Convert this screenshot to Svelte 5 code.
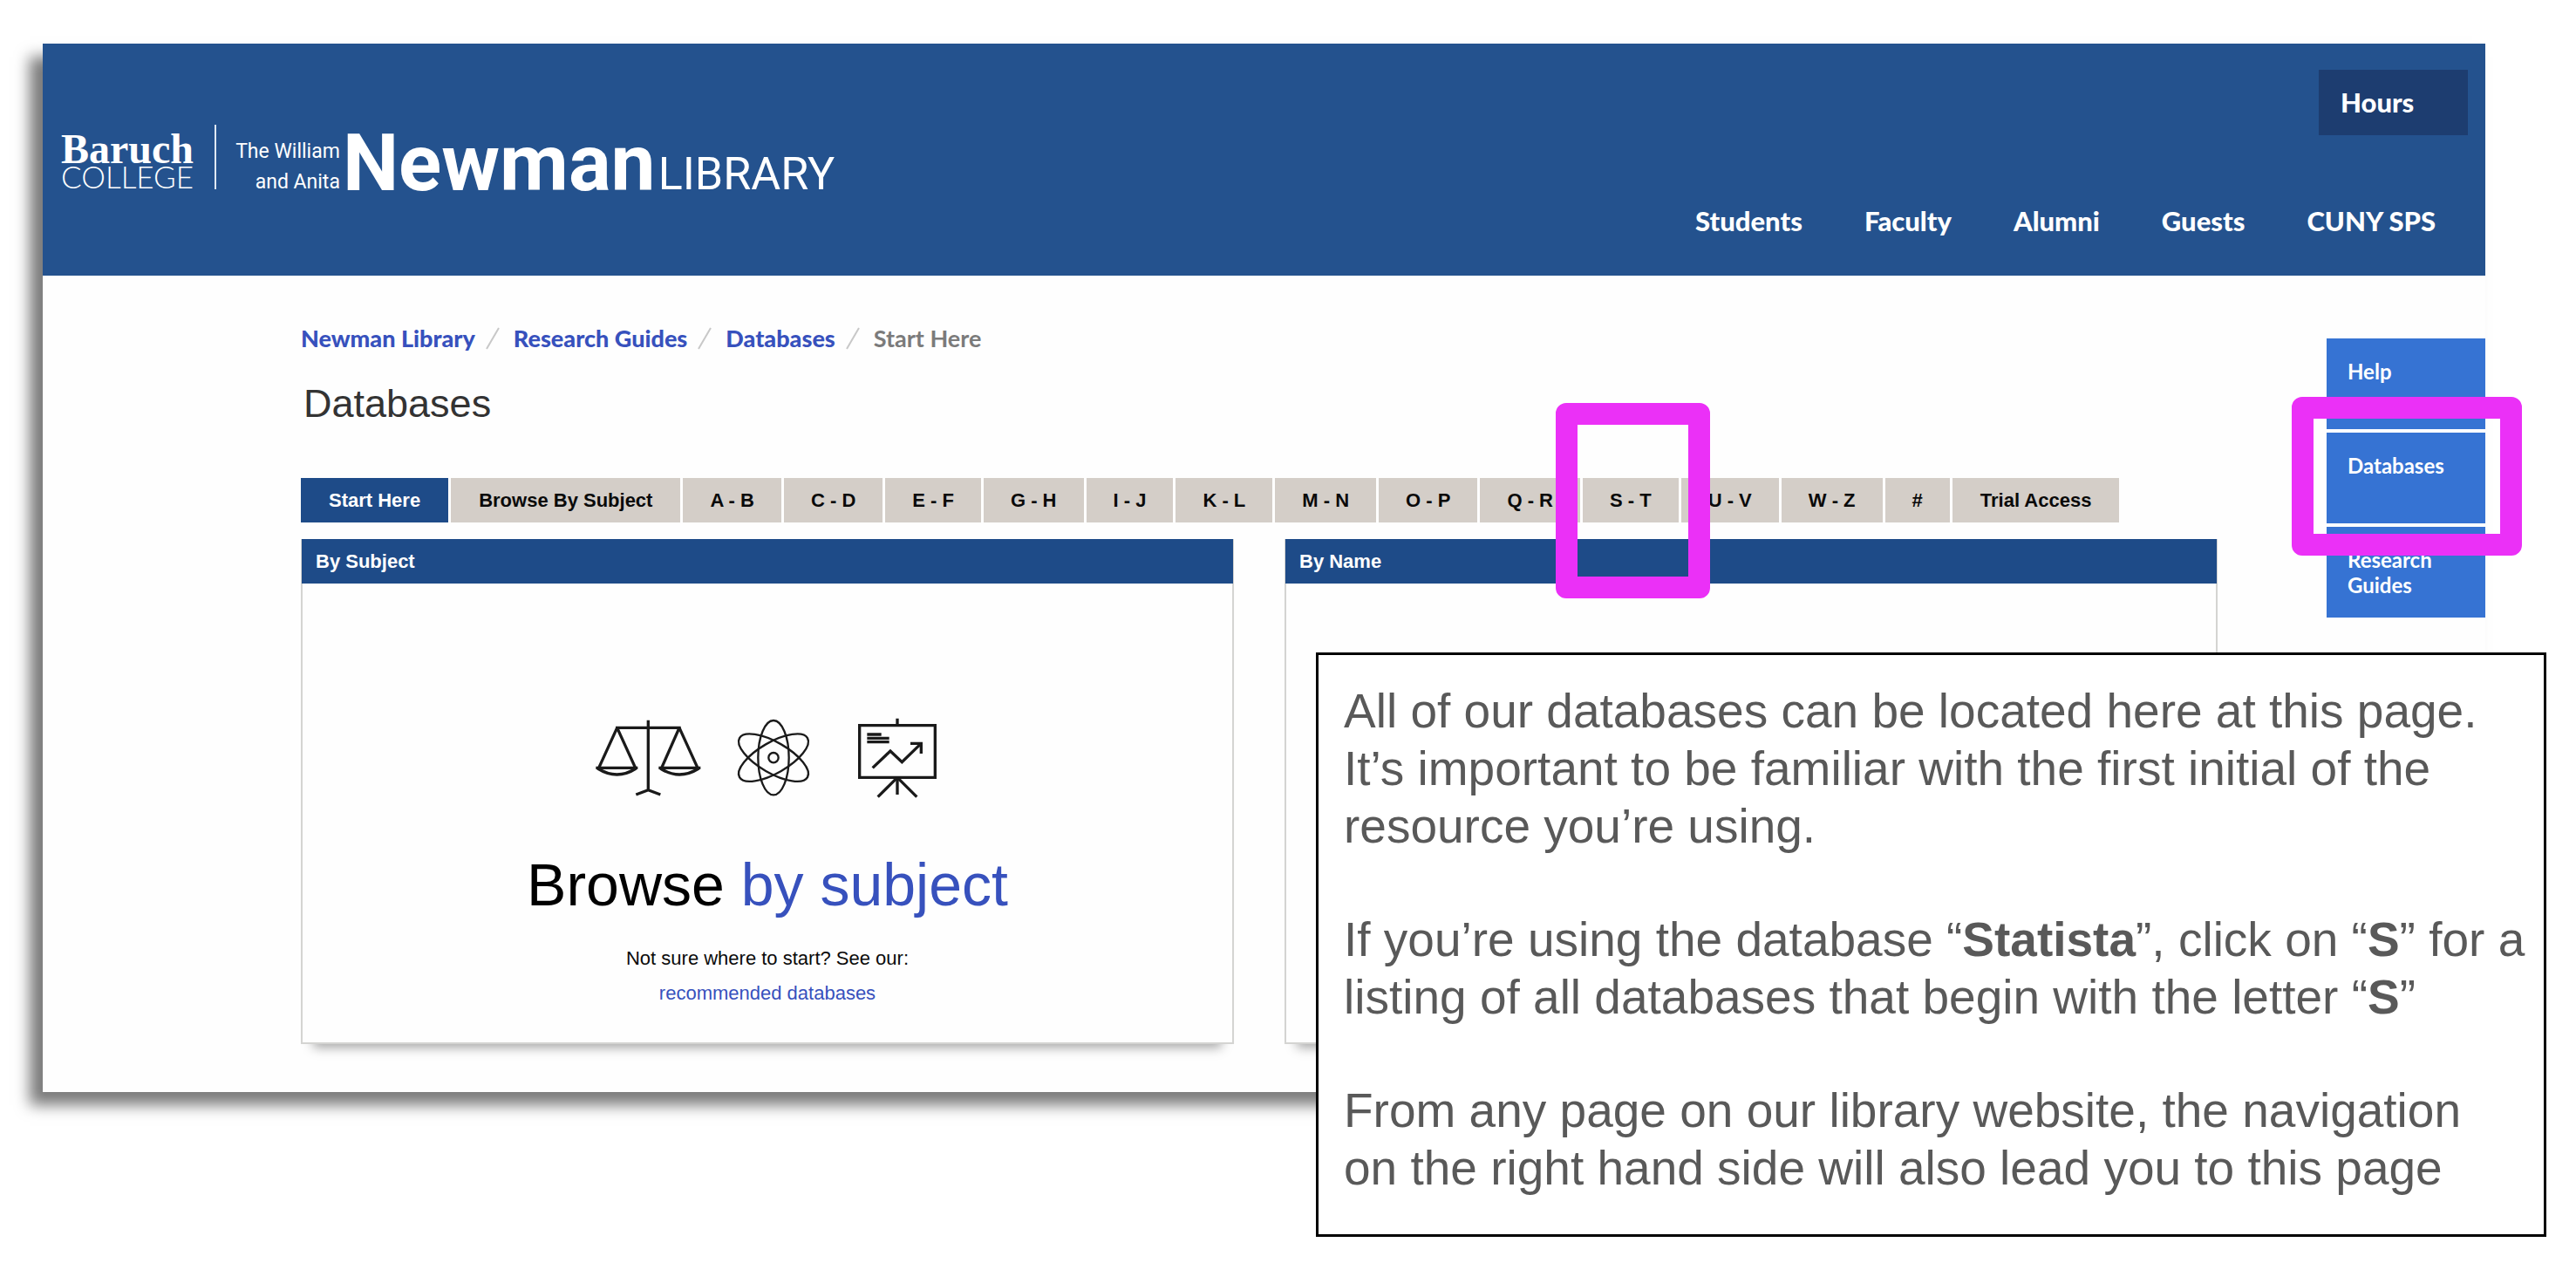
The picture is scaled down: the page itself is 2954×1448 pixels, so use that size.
<script>
  const audiences = ['Students', 'Faculty', 'Alumni', 'Guests', 'CUNY SPS'];
  const crumbs = ['Newman Library', 'Research Guides', 'Databases'];
  const tabs = [
    'Start Here', 'Browse By Subject', 'A - B', 'C - D', 'E - F', 'G - H', 'I - J', 'K - L',
    'M - N', 'O - P', 'Q - R', 'S - T', 'U - V', 'W - Z', '#', 'Trial Access'
  ];
  const sideLinks = ['Help', 'Databases', 'Research Guides'];
</script>

<div class="slide">
  <div class="site">
    <header class="banner">
      <a class="logo" href="#home">
        <span class="college">
          <span class="baruch">Baruch</span>
          <span class="college-word">COLLEGE</span>
        </span>
        <span class="rule"></span>
        <span class="donors"><span>The William</span><span>and Anita</span></span>
        <span class="newman">Newman</span>
        <span class="library">LIBRARY</span>
      </a>
      <div class="banner-right">
        <a class="hours" href="#hours">Hours</a>
        <nav class="audiences" aria-label="Audiences">
          {#each audiences as item}
            <a href="#audience">{item}</a>
          {/each}
        </nav>
      </div>
    </header>

    <div class="content">
      <main>
        <nav class="crumbs" aria-label="Breadcrumb">
          {#each crumbs as crumb}
            <a href="#crumb">{crumb}</a>
            <svg width="16" height="26" viewBox="0 0 16 26" aria-hidden="true"><path d="M1 25L15 1" /></svg>
          {/each}
          <span>Start Here</span>
        </nav>

        <h1>Databases</h1>

        <nav class="tabs" aria-label="Database lists">
          {#each tabs as tab, i}
            <a class="tab" class:active={i === 0} class:wide={tab.length > 5} href="#list">
              {tab}
              {#if tab === 'S - T'}<span class="frame tab-frame"></span>{/if}
            </a>
          {/each}
        </nav>

        <div class="panels">
          <section class="panel">
            <h2>By Subject</h2>
            <div class="panel-body">
              <div class="icons" aria-hidden="true">
                <svg width="122" height="94" viewBox="66 66 366 282">
                  <g stroke-width="10">
                    <path d="M250 74V314M138 100H362M208 330L250 314L292 330" />
                    <path d="M143 100L80 238M143 100L206 238M357 100L296 238M357 100L420 238" />
                    <path d="M70 238H214M286 238H430" />
                    <path d="M76 240Q143 282 208 240M292 240Q357 282 424 240" />
                  </g>
                </svg>
                <svg width="90" height="94" viewBox="546 66 270 282">
                  <g stroke-width="7">
                    <ellipse cx="681" cy="203" rx="53" ry="128" />
                    <ellipse cx="681" cy="203" rx="53" ry="135" transform="rotate(60 681 203)" />
                    <ellipse cx="681" cy="203" rx="53" ry="135" transform="rotate(-60 681 203)" />
                    <circle cx="681" cy="203" r="17" />
                  </g>
                </svg>
                <svg width="109" height="94" viewBox="930 66 327 282">
                  <g stroke-width="10">
                    <path d="M977 92H1237V271H977ZM1107 68V92M1107 271V330" />
                    <path d="M1104 274L1040 338M1110 274L1174 338" />
                    <path d="M1022 238L1083 180L1123 218L1188 155M1152 154H1189V189" />
                    <path d="M1003 123H1052M1003 136H1079M1003 149H1079" />
                  </g>
                </svg>
              </div>
              <p class="browse">Browse <a href="#subject">by subject</a></p>
              <p class="hint">Not sure where to start? See our:</p>
              <p class="hint"><a href="#recommended">recommended databases</a></p>
            </div>
          </section>
          <section class="panel">
            <h2>By Name</h2>
          </section>
        </div>
      </main>

      <aside>
        {#each sideLinks as link}
          <a class="side-link" href="#side">
            {link}
            {#if link === 'Databases'}<span class="frame side-frame"></span>{/if}
          </a>
        {/each}
      </aside>
    </div>
  </div>

  <div class="note">
    <p>All of our databases can be located here at this page.<br />It’s important to be familiar with the first initial of the resource you’re using.</p>
    <p>If you’re using the database “<strong>Statista</strong>”, click on “<strong>S</strong>” for a listing of all databases that begin with the letter “<strong>S</strong>”</p>
    <p>From any page on our library website, the navigation<br />on the right hand side will also lead you to this page</p>
  </div>
</div>

<style>
  :global(body) { background: #fff; }
  a { color: inherit; text-decoration: none; }
  p, h1, h2 { margin: 0; }

  .slide {
    position: relative;
    padding: 50px 104px 198px 49px;
    font-family: "Liberation Sans", Arial, sans-serif;
  }
  .site {
    background: #fefefe;
    box-shadow: -15px 15px 16px rgba(0, 0, 0, 0.52);
  }

  .banner {
    display: flex;
    justify-content: space-between;
    align-items: flex-start;
    background: #24528e;
    color: #fff;
    height: 266px;
  }
  .logo {
    display: flex;
    align-items: flex-end;
    height: 92px;
    padding: 84px 0 0 21px;
    font-family: Roboto, sans-serif;
  }
  .college { display: flex; flex-direction: column; padding-bottom: 8px; }
  .baruch {
    font: bold 48px/30px "Liberation Serif", "Times New Roman", serif;
  }
  .college-word { font: 300 35px/32px Lato, sans-serif; }
  .rule { width: 2px; height: 74px; margin: 0 22px 9px 24px; background: #dfe8f4; }
  .donors {
    display: flex;
    flex-direction: column;
    text-align: right;
    font-size: 23px;
    line-height: 35px;
  }
  .newman { margin-left: 3px; font-size: 91px; font-weight: bold; line-height: 78px; }
  .library { margin-left: 3px; font-size: 52px; line-height: 52px; }

  .banner-right { display: flex; flex-direction: column; align-items: flex-end; }
  .hours {
    box-sizing: border-box;
    width: 171px;
    margin: 30px 20px 0 0;
    padding: 0 25px;
    background: #1d3d70;
    font: 900 31px/75px Lato, sans-serif;
  }
  .audiences {
    display: flex;
    gap: 71px;
    padding: 78px 57px 0 0;
    font: 900 31px/40px Lato, sans-serif;
  }

  .content { display: flex; padding: 0 0 55px 296px; }
  main { flex: 1; min-width: 0; }

  .crumbs {
    display: flex;
    align-items: center;
    margin-top: 56px;
    font: 900 27px/32px Lato, sans-serif;
    color: #3751bd;
  }
  .crumbs svg { margin: 0 16px 0 12px; fill: none; stroke: #c8c8c8; stroke-width: 2; }
  .crumbs span { color: #7b7b7b; font-weight: 700; }

  h1 { margin: 33px 0 0 3px; font: 45px/52px "Liberation Sans", Arial, sans-serif; color: #333; }

  .tabs { display: flex; flex-wrap: wrap; gap: 3px; margin-top: 59px; }
  .tab {
    position: relative;
    padding: 0 31px;
    background: #d4cec8;
    color: #0a0a0a;
    font-size: 22px;
    font-weight: bold;
    line-height: 51px;
  }
  .tab.wide { padding: 0 32px; }
  .tab.active { background: #1e4b88; color: #fff; }

  .frame {
    position: absolute;
    z-index: 1;
    border: 25px solid #eb30f7;
    border-radius: 12px;
    pointer-events: none;
  }
  .tab-frame { inset: -86px -36px -87px -31px; }
  .side-frame { inset: -41px -42px -37px -40px; }

  .panels { display: grid; grid-template-columns: 1fr 1fr; gap: 58px; margin-top: 19px; }
  .panel {
    border: 2px solid #d4d4d2;
    border-top: 0;
    background: #fefefe;
    box-shadow: 0 18px 12px -14px rgba(0, 0, 0, 0.35);
  }
  .panel h2 {
    margin: 0 -1px;
    padding-left: 16px;
    background: #1e4b88;
    color: #fff;
    font-size: 22px;
    line-height: 51px;
  }
  .panel-body { padding: 154px 0 36px; text-align: center; color: #0a0a0a; }
  .icons { display: flex; justify-content: center; gap: 38px; }
  .icons svg { fill: none; stroke: #1a1a1a; }
  .browse { margin: 57px 0 25px; font-size: 68px; line-height: 80px; color: #000; }
  .hint { font-size: 22px; line-height: 40px; }
  .panel-body a { color: #3751bd; }

  aside {
    display: flex;
    flex-direction: column;
    gap: 4px;
    width: 182px;
    margin: 72px 0 0 125px;
  }
  .side-link {
    position: relative;
    box-sizing: border-box;
    min-height: 104px;
    padding: 23px 24px;
    background: #3673d3;
    color: #fff;
    font: 700 24px/29px Lato, sans-serif;
  }

  .note {
    position: absolute;
    z-index: 2;
    top: 748px;
    right: 34px;
    box-sizing: border-box;
    width: 1411px;
    max-width: 96%;
    padding: 31px 18px 43px 29px;
    border: 3px solid #000;
    background: #fff;
    color: #595959;
    font-size: 55px;
    line-height: 66px;
  }
  .note p + p { margin-top: 64px; }
</style>
